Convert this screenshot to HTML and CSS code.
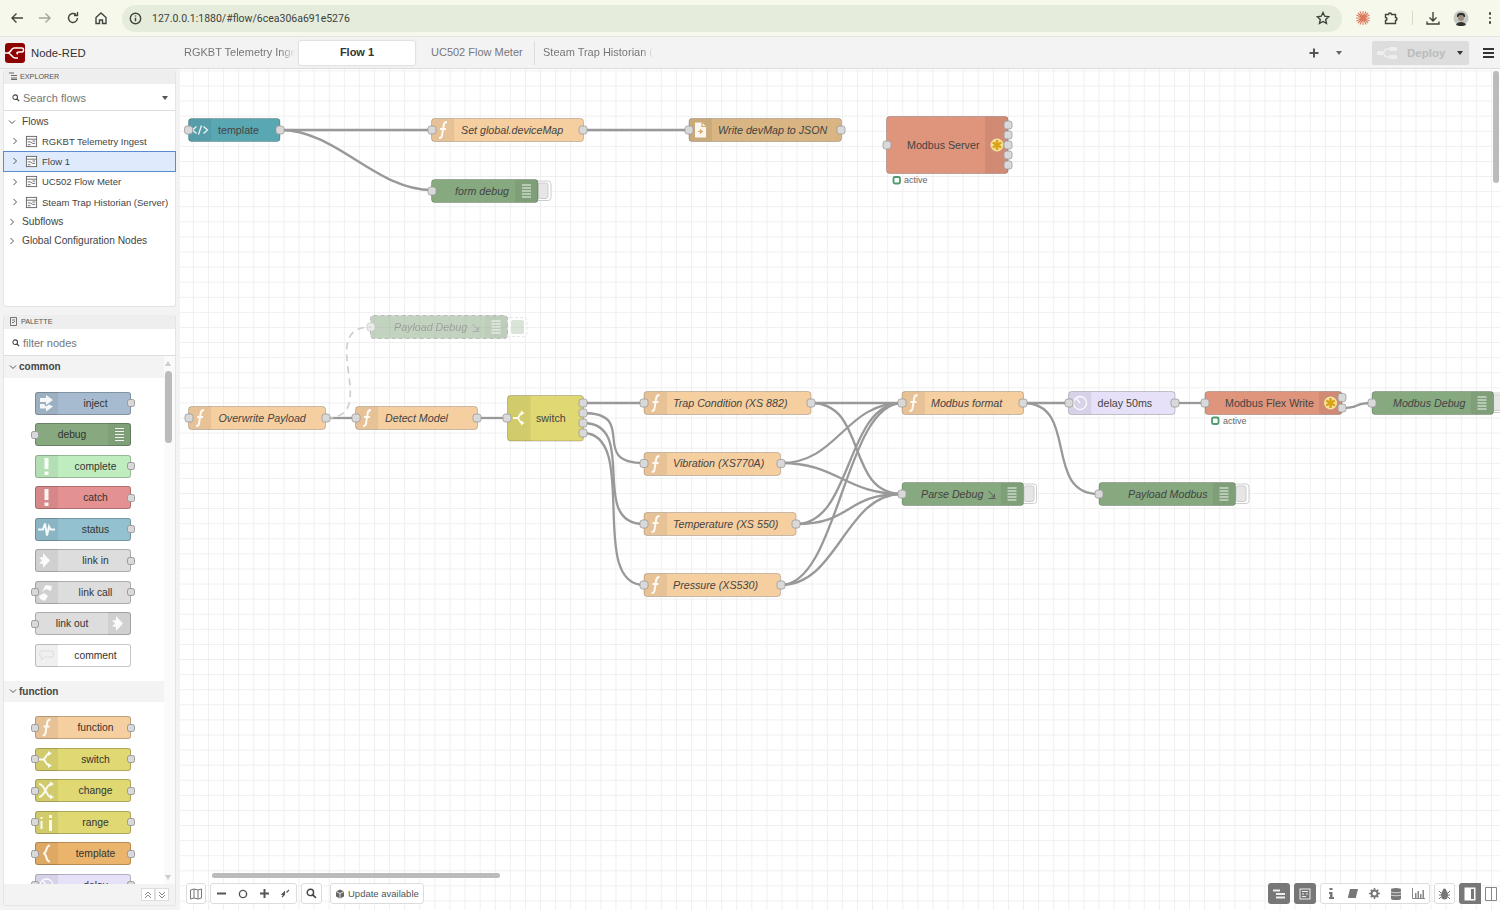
FILE: index.html
```html
<!DOCTYPE html>
<html lang="en">
<head>
    <meta charset="UTF-8">
    <title>Node-RED</title>
    <link rel="stylesheet" href="styles.css">
</head>
<body>
    <!-- shared icons: each node icon carries its own darker strip -->
    <svg class="sprite" width="0" height="0">
        <symbol id="strip-l" viewBox="0 0 23 23"><path class="strip" d="M3 0h20v23H3a3 3 0 0 1-3-3V3a3 3 0 0 1 3-3z"/></symbol>
        <symbol id="i-func" viewBox="0 0 23 23"><use href="#strip-l"/><path class="ic" d="M15.5 3.5c-2.6 0-3.1 1.4-3.4 3.6l-1.6 10c-.3 1.6-1 2.4-3 2.4M8.5 10.5h6"/></symbol>
        <symbol id="i-code" viewBox="0 0 23 23"><use href="#strip-l"/><path class="ic thin" d="M8 8l-4 3.5 4 3.5M15 8l4 3.5-4 3.500M13 7l-3 9"/></symbol>
        <symbol id="i-file" viewBox="0 0 23 23"><use href="#strip-l"/><path class="solid" d="M6 4h7l4 4v11H6z"/><path class="cut" d="M13 4v4h4M9 13h4l-2-2M13 13l-2 2"/></symbol>
        <symbol id="i-switch" viewBox="0 0 23 23"><use href="#strip-l"/><path class="ic" d="M3 11.5h5c3 0 2.5-5.5 6-6M8 11.5c3 0 2.5 5.500 6 6"/><path class="solid" d="M13 3l4 2.5-4 2.5zM13 15l4 2.5-4 2.5z"/></symbol>
        <symbol id="i-clock" viewBox="0 0 23 23"><use href="#strip-l"/><circle class="ic thin" cx="11.5" cy="11.5" r="6.5"/><path class="ic thin" d="M8 7l3.5 4.5"/></symbol>
        <symbol id="i-inject" viewBox="0 0 23 23"><use href="#strip-l"/><path class="solid" d="M5 6h6V3l7 5-7 5v-3H5zM5 12h4l2 2.5 3-2 4 2-7 5v-3H5z"/></symbol>
        <symbol id="i-bang" viewBox="0 0 23 23"><use href="#strip-l"/><path class="solid" d="M9.500 3h4v11h-4zM9.500 16.500h4v3.500h-4z"/></symbol>
        <symbol id="i-status" viewBox="0 0 23 23"><use href="#strip-l"/><path class="ic" d="M3 11.5h5l2-6 2 12 2-9 1.5 3H20"/></symbol>
        <symbol id="i-link" viewBox="0 0 23 23"><use href="#strip-l"/><path class="solid" d="M8 4l7 7.5-7 7.5v-4l-4-.5 3-3-3-3 4-.5z"/></symbol>
        <symbol id="i-linkcall" viewBox="0 0 23 23"><use href="#strip-l"/><path class="solid" d="M11 4l6 1-1 5-5-2-4 3 3-6zM4 15l5-3 4 3-3 5-5-2z"/></symbol>
        <symbol id="i-comment" viewBox="0 0 23 23"><use href="#strip-l"/><path class="soft" d="M6 7h11c2 0 2 6 0 6h-7l-4 3 1-3c-3 0-3-6-1-6z"/></symbol>
        <symbol id="i-change" viewBox="0 0 23 23"><use href="#strip-l"/><path class="ic" d="M4 5c6 0 7 13 12 13M4 18c6 0 7-13 12-13"/><path class="solid" d="M15 2.500l4 2.500-4 2.500zM15 15.500l4 2.500-4 2.500z"/></symbol>
        <symbol id="i-range" viewBox="0 0 23 23"><use href="#strip-l"/><path class="solid" d="M5.500 6h2v2h-2zM5.500 10h2v8h-2zM14 4h3v3h-3zM14 9h3v11h-3z"/></symbol>
        <symbol id="i-brace" viewBox="0 0 23 23"><use href="#strip-l"/><path class="ic" d="M15 3.500c-5 0-2 7-6.500 8 4.500 1 1.500 8 6.500 8"/></symbol>
        <symbol id="i-debug" viewBox="0 0 23 23"><path class="strip" d="M0 0h20a3 3 0 0 1 3 3v17a3 3 0 0 1-3 3H0z"/><path class="ic lines" d="M7 5.500h9M7 8.500h9M7 11.500h9M7 14.500h9M7 17.500h9"/></symbol>
        <symbol id="i-linkout" viewBox="0 0 23 23"><path class="strip" d="M0 0h20a3 3 0 0 1 3 3v17a3 3 0 0 1-3 3H0z"/><path class="solid" d="M8 4l7 7.5-7 7.5v-4l-4-.5 3-3-3-3 4-.5z"/></symbol>
        <symbol id="i-star" viewBox="0 0 16 16"><circle cx="8" cy="8" r="6.5" fill="#f6e3a0"/><path d="M8 3v10M3.700 5.500l8.600 5M3.700 10.500l8.600-5" stroke="#d9a516" stroke-width="2.600"/></symbol>
        <symbol id="i-flow" viewBox="0 0 14 14"><rect x="1.500" y="1.500" width="11" height="11" fill="#fff" stroke="#666"/><path d="M1.500 4.500h11M3 7.500h3M3 10.500h3M8 6.500h3M8 9h3M6 7.500l2 1.500" fill="none" stroke="#666"/></symbol>
        <symbol id="i-filter" viewBox="0 0 9 9"><path d="M1 1l6 6M7 4v3H4M1 8.500h7" fill="none" stroke="#555" stroke-width=".9"/></symbol>
        <symbol id="i-search" viewBox="0 0 10 10"><circle cx="4" cy="4" r="2.900" fill="none" stroke="#444" stroke-width="1.300"/><path d="M6.200 6.200L9 9" stroke="#444" stroke-width="1.500"/></symbol>
        <symbol id="i-chev" viewBox="0 0 8 8"><path d="M2.500 1l3 3-3 3" fill="none" stroke="#555" stroke-width="1"/></symbol>
        <symbol id="i-chevd" viewBox="0 0 8 8"><path d="M1 2.500l3 3 3-3" fill="none" stroke="#555" stroke-width="1"/></symbol>
    </svg>

    <div class="browser-bar">
        <div class="nav-btn"><svg width="14" height="14" viewBox="0 0 14 14"><path class="chrome-ic" d="M13 7H2M6.500 2.500L2 7l4.500 4.500"/></svg></div>
        <div class="nav-btn faded"><svg width="14" height="14" viewBox="0 0 14 14"><path class="chrome-ic" d="M1 7h11M7.500 2.500L12 7l-4.500 4.500"/></svg></div>
        <div class="nav-btn"><svg width="14" height="14" viewBox="0 0 14 14"><path class="chrome-ic" d="M11.500 7A4.500 4.500 0 1 1 10 3.600M11.500 1v3.500H8"/></svg></div>
        <div class="nav-btn"><svg width="14" height="14" viewBox="0 0 14 14"><path class="chrome-ic" d="M2 6.500L7 2l5 4.500V12.500H8.500V9h-3v3.500H2z"/></svg></div>
        <div class="url-pill">
            <svg width="13" height="13" viewBox="0 0 13 13"><circle class="chrome-ic" cx="6.500" cy="6.500" r="5.200"/><path class="chrome-ic" d="M6.500 5.800v3.400M6.500 3.600v1"/></svg>
            <span class="url-text">127.0.0.1:1880/#flow/6cea306a691e5276</span>
            <svg class="url-star" width="14" height="14" viewBox="0 0 14 14"><path class="chrome-ic" d="M7 1.500l1.700 3.700 4 .5-3 2.700.8 4L7 10.500l-3.500 1.900.8-4-3-2.700 4-.5z"/></svg>
        </div>
        <div class="nav-btn first-ext"><svg width="16" height="16" viewBox="0 0 16 16"><path d="M8 1v14M1 8h14M3 3l10 10M13 3L3 13M5 1.500l6 13M11 1.500l-6 13M1.500 5l13 6M1.500 11l13-6" stroke="#dc7a5c" stroke-width="1.100"/></svg></div>
        <div class="nav-btn"><svg width="14" height="14" viewBox="0 0 14 14"><path class="chrome-ic" d="M1.500 3.500h3a1.500 1.500 0 0 1 3 0h4v3a1.500 1.500 0 0 1 0 3v3h-10V9.500a1.500 1.500 0 0 0 0-3z"/></svg></div>
        <div class="bar-sep"></div>
        <div class="nav-btn"><svg width="14" height="14" viewBox="0 0 14 14"><path class="chrome-ic" d="M7 1v8.500M3.500 6.500L7 10l3.500-3.500M1 10.500V13h12v-2.500"/></svg></div>
        <div class="nav-btn"><svg width="16" height="16" viewBox="0 0 16 16"><circle cx="8" cy="8" r="7.500" fill="#c4c9c4"/><path d="M4 5c1-3 7-3 8 0v2H4z" fill="#2e2e2e"/><circle cx="8" cy="8" r="3" fill="#9b8d80"/><path d="M3 15c1-4 9-4 10 0l-3 1H6z" fill="#333"/></svg></div>
        <div class="dots"><i></i><i></i><i></i></div>
    </div>

    <header class="nr-header">
        <div class="brand">
            <svg width="20" height="20" viewBox="0 0 20 20"><rect width="20" height="20" rx="3" fill="#8f0000"/><path d="M0 10h3c3 0 3-5 6-5M3 10c3 0 4 5 7 5h3M14 5h3c2 0 2 4 0 4h-3c-2 0-3 1-1 2M9 5h5" fill="none" stroke="#fff" stroke-width="1.500"/></svg>
            <span>Node-RED</span>
        </div>
        <div class="tabs">
            <div class="tab cut-tab">RGKBT Telemetry Ingest</div>
            <div class="tab active">Flow 1</div>
            <div class="tab plain">UC502 Flow Meter</div>
            <div class="tab steam">Steam Trap Historian (Server)</div>
        </div>
        <div class="tab-tools">
            <svg width="10" height="10" viewBox="0 0 10 10"><path d="M5 .5v9M.5 5h9" stroke="#555" stroke-width="2"/></svg>
            <span class="caret"></span>
        </div>
        <div class="deploy">
            <svg width="20" height="14" viewBox="0 0 20 14"><path d="M1 7h5l3-4h4M6 7l3 4h4" fill="none" stroke="#eee" stroke-width="1.500"/><rect y="5" width="6" height="4" rx="1" fill="#eee"/><rect x="12" y="1" width="8" height="4" rx="1" fill="#eee"/><rect x="12" y="9" width="8" height="4" rx="1" fill="#eee"/></svg>
            <span>Deploy</span>
            <span class="caret dark"></span>
        </div>
        <div class="burger"><i></i><i></i><i></i></div>
    </header>

    <main class="workspace">
        <aside class="sidebar">
            <section class="panel explorer">
                <div class="panel-head">
                    <svg width="8" height="8" viewBox="0 0 8 8"><path d="M0 1h5M2 3.500h6M2 6h6M2 7.500h6" stroke="#666" stroke-width="1.200"/></svg>
                    EXPLORER
                </div>
                <div class="search-row">
                    <svg width="8" height="8"><use href="#i-search"/></svg>
                    <span>Search flows</span>
                    <span class="caret small"></span>
                </div>
                <div class="tree">
                    <div class="tree-row top"><svg class="chev" width="8" height="8"><use href="#i-chevd"/></svg>Flows</div>
                    <div class="tree-row flow-row"><svg class="chev" width="8" height="8"><use href="#i-chev"/></svg><svg class="flow-ic" width="13" height="13"><use href="#i-flow"/></svg>RGKBT Telemetry Ingest</div>
                    <div class="tree-row flow-row selected"><svg class="chev" width="8" height="8"><use href="#i-chev"/></svg><svg class="flow-ic" width="13" height="13"><use href="#i-flow"/></svg>Flow 1</div>
                    <div class="tree-row flow-row"><svg class="chev" width="8" height="8"><use href="#i-chev"/></svg><svg class="flow-ic" width="13" height="13"><use href="#i-flow"/></svg>UC502 Flow Meter</div>
                    <div class="tree-row flow-row"><svg class="chev" width="8" height="8"><use href="#i-chev"/></svg><svg class="flow-ic" width="13" height="13"><use href="#i-flow"/></svg>Steam Trap Historian (Server)</div>
                    <div class="tree-row top"><svg class="chev" width="8" height="8"><use href="#i-chev"/></svg>Subflows</div>
                    <div class="tree-row top"><svg class="chev" width="8" height="8"><use href="#i-chev"/></svg>Global Configuration Nodes</div>
                </div>
            </section>

            <section class="panel palette">
                <div class="panel-head">
                    <svg width="9" height="9" viewBox="0 0 9 9"><path d="M1.500 .5h6v8h-6zM3 3h3M3 5l1 1 2-2" fill="none" stroke="#666" stroke-width=".9"/></svg>
                    PALETTE
                </div>
                <div class="search-row">
                    <svg width="8" height="8"><use href="#i-search"/></svg>
                    <span>filter nodes</span>
                </div>
                <div class="palette-scroll">
                    <div class="palette-list">
                        <div class="cat-head"><svg width="8" height="8"><use href="#i-chevd"/></svg>common</div>
                        <div class="cat-body">
                            <div class="pal-node c-inject"><svg width="23" height="23"><use href="#i-inject"/></svg><span>inject</span><i class="pal-port out"></i></div>
                            <div class="pal-node c-debug right"><svg width="23" height="23"><use href="#i-debug"/></svg><span>debug</span><i class="pal-port in"></i></div>
                            <div class="pal-node c-complete"><svg width="23" height="23"><use href="#i-bang"/></svg><span>complete</span><i class="pal-port out"></i></div>
                            <div class="pal-node c-catch"><svg width="23" height="23"><use href="#i-bang"/></svg><span>catch</span><i class="pal-port out"></i></div>
                            <div class="pal-node c-status"><svg width="23" height="23"><use href="#i-status"/></svg><span>status</span><i class="pal-port out"></i></div>
                            <div class="pal-node c-link"><svg width="23" height="23"><use href="#i-link"/></svg><span>link in</span><i class="pal-port out"></i></div>
                            <div class="pal-node c-link"><svg width="23" height="23"><use href="#i-linkcall"/></svg><span>link call</span><i class="pal-port in"></i><i class="pal-port out"></i></div>
                            <div class="pal-node c-link right"><svg width="23" height="23"><use href="#i-linkout"/></svg><span>link out</span><i class="pal-port in"></i></div>
                            <div class="pal-node c-comment"><svg width="23" height="23"><use href="#i-comment"/></svg><span>comment</span></div>
                        </div>
                        <div class="cat-head"><svg width="8" height="8"><use href="#i-chevd"/></svg>function</div>
                        <div class="cat-body">
                            <div class="pal-node c-function"><svg width="23" height="23"><use href="#i-func"/></svg><span>function</span><i class="pal-port in"></i><i class="pal-port out"></i></div>
                            <div class="pal-node c-switch"><svg width="23" height="23"><use href="#i-switch"/></svg><span>switch</span><i class="pal-port in"></i><i class="pal-port out"></i></div>
                            <div class="pal-node c-switch"><svg width="23" height="23"><use href="#i-change"/></svg><span>change</span><i class="pal-port in"></i><i class="pal-port out"></i></div>
                            <div class="pal-node c-switch"><svg width="23" height="23"><use href="#i-range"/></svg><span>range</span><i class="pal-port in"></i><i class="pal-port out"></i></div>
                            <div class="pal-node c-template"><svg width="23" height="23"><use href="#i-brace"/></svg><span>template</span><i class="pal-port in"></i><i class="pal-port out"></i></div>
                            <div class="pal-node c-delay"><svg width="23" height="23"><use href="#i-clock"/></svg><span>delay</span><i class="pal-port in"></i><i class="pal-port out"></i></div>
                        </div>
                    </div>
                    <div class="pal-scrollbar">
                        <span class="arrow up"></span>
                        <span class="thumb"></span>
                        <span class="arrow down"></span>
                    </div>
                </div>
                <div class="palette-foot">
                    <div class="foot-btns">
                        <span><svg width="8" height="8" viewBox="0 0 8 8"><path d="M1 4l3-3 3 3M1 7l3-3 3 3" fill="none" stroke="#888"/></svg></span>
                        <span><svg width="8" height="8" viewBox="0 0 8 8"><path d="M1 1l3 3 3-3M1 4l3 3 3-3" fill="none" stroke="#888"/></svg></span>
                    </div>
                </div>
            </section>
        </aside>

        <div class="canvas">
            <svg class="flow-svg" width="1320" height="841">
                <g transform="translate(-180 -69)">
                    <!-- wires -->
                    <path class="wire" d="M280 130H432"/>
                    <path class="wire" d="M280 130C337 130 375 190 432 190"/>
                    <path class="wire" d="M583 130H689"/>
                    <path class="wire" d="M326 418H356"/>
                    <path class="wire dashed" d="M326 418C383 418 314 327 371 327"/>
                    <path class="wire" d="M477 418H507"/>
                    <path class="wire" d="M583 403H644"/>
                    <path class="wire" d="M583 413C640 413 587 463 644 463"/>
                    <path class="wire" d="M583 423C640 423 587 524 644 524"/>
                    <path class="wire" d="M583 433C640 433 587 585 644 585"/>
                    <path class="wire" d="M811 403H902"/>
                    <path class="wire" d="M811 403C868 403 845 494 902 494"/>
                    <path class="wire" d="M781 463C838 463 845 403 902 403"/>
                    <path class="wire" d="M781 463C838 463 845 494 902 494"/>
                    <path class="wire" d="M796 524C853 524 845 403 902 403"/>
                    <path class="wire" d="M796 524C853 524 845 494 902 494"/>
                    <path class="wire" d="M781 585C838 585 845 403 902 403"/>
                    <path class="wire" d="M781 585C838 585 845 494 902 494"/>
                    <path class="wire" d="M1023 403H1068"/>
                    <path class="wire" d="M1023 403C1080 403 1042 494 1099 494"/>
                    <path class="wire" d="M1175 403H1205"/>
                    <path class="wire" d="M1342 408C1362 408 1352 403 1372 403"/>

                    <!-- top row -->
                    <g class="node n-http">
                        <rect class="body" x="188.5" y="118.5" width="91.5" height="23" rx="3"/>
                        <use href="#i-code" x="188.5" y="118.5" width="23" height="23"/>
                        <text class="label" x="218" y="134">template</text>
                        <rect class="port" x="184.5" y="126" width="8" height="8" rx="2.5"/>
                        <rect class="port" x="276" y="126" width="8" height="8" rx="2.5"/>
                    </g>
                    <g class="node n-func">
                        <rect class="body" x="431.5" y="118.5" width="152" height="23" rx="3"/>
                        <use href="#i-func" x="431.5" y="118.5" width="23" height="23"/>
                        <text class="label em" x="461" y="134">Set global.deviceMap</text>
                        <rect class="port" x="428" y="126" width="8" height="8" rx="2.5"/>
                        <rect class="port" x="579" y="126" width="8" height="8" rx="2.5"/>
                    </g>
                    <g class="node n-file">
                        <rect class="body" x="689" y="118.5" width="152.5" height="23" rx="3"/>
                        <use href="#i-file" x="689" y="118.5" width="23" height="23"/>
                        <text class="label em" x="718" y="134">Write devMap to JSON</text>
                        <rect class="port" x="685" y="126" width="8" height="8" rx="2.5"/>
                        <rect class="port" x="837" y="126" width="8" height="8" rx="2.5"/>
                    </g>
                    <g class="node n-debug">
                        <rect class="btn-out" x="536" y="181" width="15" height="19.5" rx="3"/>
                        <rect class="btn-in" x="538" y="183" width="10" height="15.5" rx="2"/>
                        <rect class="body" x="431.5" y="179.5" width="106.5" height="23" rx="3"/>
                        <use href="#i-debug" x="515" y="179.5" width="23" height="23"/>
                        <text class="label em" x="455" y="195">form debug</text>
                        <rect class="port" x="428" y="187" width="8" height="8" rx="2.5"/>
                    </g>
                    <g class="node n-modbus">
                        <rect class="body" x="886.5" y="116.5" width="121.5" height="57" rx="3"/>
                        <path class="strip" d="M985 116.5h20a3 3 0 0 1 3 3v51a3 3 0 0 1-3 3h-20z"/>
                        <use href="#i-star" x="989" y="137" width="16" height="16"/>
                        <text class="label" x="907" y="149">Modbus Server</text>
                        <rect class="port" x="883" y="141" width="8" height="8" rx="2.5"/>
                        <rect class="port" x="1004" y="121" width="8" height="8" rx="2.5"/>
                        <rect class="port" x="1004" y="131" width="8" height="8" rx="2.5"/>
                        <rect class="port" x="1004" y="141" width="8" height="8" rx="2.5"/>
                        <rect class="port" x="1004" y="151" width="8" height="8" rx="2.5"/>
                        <rect class="port" x="1004" y="161" width="8" height="8" rx="2.5"/>
                        <rect class="dot" x="893.5" y="177" width="6.5" height="6.5" rx="1.5"/>
                        <text class="status" x="904" y="183">active</text>
                    </g>

                    <!-- disabled debug -->
                    <g class="node n-debug ghost">
                        <rect class="btn-out dash" x="507" y="317.5" width="20" height="19" rx="3"/>
                        <rect class="btn-in" x="511" y="320" width="13" height="14" rx="2"/>
                        <rect class="body" x="370.5" y="315.5" width="137" height="23" rx="3"/>
                        <use href="#i-debug" x="484.5" y="315.5" width="23" height="23"/>
                        <text class="label em" x="394" y="331">Payload Debug</text>
                        <use href="#i-filter" x="471.5" y="323" width="9" height="9"/>
                        <rect class="port" x="367" y="323" width="8" height="8" rx="2.5"/>
                    </g>

                    <!-- middle row -->
                    <g class="node n-func">
                        <rect class="body" x="188.5" y="406.5" width="137" height="23" rx="3"/>
                        <use href="#i-func" x="188.5" y="406.5" width="23" height="23"/>
                        <text class="label em" x="218.5" y="422">Overwrite Payload</text>
                        <rect class="port" x="185" y="414" width="8" height="8" rx="2.5"/>
                        <rect class="port" x="322" y="414" width="8" height="8" rx="2.5"/>
                    </g>
                    <g class="node n-func">
                        <rect class="body" x="355.5" y="406.5" width="122" height="23" rx="3"/>
                        <use href="#i-func" x="355.5" y="406.5" width="23" height="23"/>
                        <text class="label em" x="385" y="422">Detect Model</text>
                        <rect class="port" x="352" y="414" width="8" height="8" rx="2.5"/>
                        <rect class="port" x="473" y="414" width="8" height="8" rx="2.5"/>
                    </g>
                    <g class="node n-switch">
                        <rect class="body" x="507.5" y="395.5" width="76" height="45.5" rx="3"/>
                        <path class="strip" d="M510.500 395.5h20v45.5h-20a3 3 0 0 1-3-3v-39.5a3 3 0 0 1 3-3z"/>
                        <path class="ic" d="M513 418h4c3 0 2-5 5-5M517 418c3 0 2 5 5 5"/>
                        <path class="solid" d="M521 410.5l3.5 2.5-3.5 2.5zM521 420.5l3.5 2.5-3.5 2.5z"/>
                        <text class="label" x="536" y="422">switch</text>
                        <rect class="port" x="503" y="414" width="8" height="8" rx="2.5"/>
                        <rect class="port" x="579" y="399" width="8" height="8" rx="2.5"/>
                        <rect class="port" x="579" y="409" width="8" height="8" rx="2.5"/>
                        <rect class="port" x="579" y="419" width="8" height="8" rx="2.5"/>
                        <rect class="port" x="579" y="429" width="8" height="8" rx="2.5"/>
                    </g>
                    <g class="node n-func">
                        <rect class="body" x="644" y="391.5" width="167" height="23" rx="3"/>
                        <use href="#i-func" x="644" y="391.5" width="23" height="23"/>
                        <text class="label em" x="673" y="407">Trap Condition (XS 882)</text>
                        <rect class="port" x="640" y="399" width="8" height="8" rx="2.5"/>
                        <rect class="port" x="807" y="399" width="8" height="8" rx="2.5"/>
                    </g>
                    <g class="node n-func">
                        <rect class="body" x="644" y="452.5" width="136.5" height="23" rx="3"/>
                        <use href="#i-func" x="644" y="452.5" width="23" height="23"/>
                        <text class="label em" x="673" y="467">Vibration (XS770A)</text>
                        <rect class="port" x="640" y="459.5" width="8" height="8" rx="2.5"/>
                        <rect class="port" x="777" y="459.5" width="8" height="8" rx="2.5"/>
                    </g>
                    <g class="node n-func">
                        <rect class="body" x="644" y="512.5" width="152" height="23" rx="3"/>
                        <use href="#i-func" x="644" y="512.5" width="23" height="23"/>
                        <text class="label em" x="673" y="528">Temperature (XS 550)</text>
                        <rect class="port" x="640" y="520" width="8" height="8" rx="2.5"/>
                        <rect class="port" x="792" y="520" width="8" height="8" rx="2.5"/>
                    </g>
                    <g class="node n-func">
                        <rect class="body" x="644" y="573.5" width="136.5" height="23" rx="3"/>
                        <use href="#i-func" x="644" y="573.5" width="23" height="23"/>
                        <text class="label em" x="673" y="589">Pressure (XS530)</text>
                        <rect class="port" x="640" y="581" width="8" height="8" rx="2.5"/>
                        <rect class="port" x="777" y="581" width="8" height="8" rx="2.5"/>
                    </g>
                    <g class="node n-func">
                        <rect class="body" x="902" y="391.5" width="121.5" height="23" rx="3"/>
                        <use href="#i-func" x="902" y="391.5" width="23" height="23"/>
                        <text class="label em" x="931" y="407">Modbus format</text>
                        <rect class="port" x="898" y="399" width="8" height="8" rx="2.5"/>
                        <rect class="port" x="1019" y="399" width="8" height="8" rx="2.5"/>
                    </g>
                    <g class="node n-debug">
                        <rect class="btn-out" x="1021" y="484" width="15.5" height="19.5" rx="3"/>
                        <rect class="btn-in" x="1024" y="486" width="10" height="15.5" rx="2"/>
                        <rect class="body" x="902" y="482.5" width="121.5" height="23" rx="3"/>
                        <use href="#i-debug" x="1000.5" y="482.5" width="23" height="23"/>
                        <text class="label em" x="921" y="498">Parse Debug</text>
                        <use href="#i-filter" x="987.5" y="490" width="9" height="9"/>
                        <rect class="port" x="898" y="490" width="8" height="8" rx="2.5"/>
                    </g>
                    <g class="node n-delay">
                        <rect class="body" x="1068.5" y="391.5" width="106.5" height="23" rx="3"/>
                        <use href="#i-clock" x="1068.5" y="391.5" width="23" height="23"/>
                        <text class="label" x="1097.5" y="407">delay 50ms</text>
                        <rect class="port" x="1065" y="399" width="8" height="8" rx="2.5"/>
                        <rect class="port" x="1171" y="399" width="8" height="8" rx="2.5"/>
                    </g>
                    <g class="node n-modbus">
                        <rect class="body" x="1205" y="391.5" width="137" height="23" rx="3"/>
                        <path class="strip" d="M1319 391.5h20a3 3 0 0 1 3 3v17a3 3 0 0 1-3 3h-20z"/>
                        <use href="#i-star" x="1322.5" y="395" width="16" height="16"/>
                        <text class="label" x="1225" y="407">Modbus Flex Write</text>
                        <rect class="port" x="1201" y="399" width="8" height="8" rx="2.5"/>
                        <rect class="port" x="1338" y="393.5" width="8" height="8" rx="2.5"/>
                        <rect class="port" x="1338" y="404" width="8" height="8" rx="2.5"/>
                        <rect class="dot" x="1212" y="417.5" width="6.5" height="6.5" rx="1.5"/>
                        <text class="status" x="1223" y="424">active</text>
                    </g>
                    <g class="node n-debug">
                        <rect class="btn-out" x="1490" y="393" width="15.5" height="19.5" rx="3"/>
                        <rect class="btn-in" x="1493" y="395" width="10" height="15.5" rx="2"/>
                        <rect class="body" x="1372" y="391.5" width="121.5" height="23" rx="3"/>
                        <use href="#i-debug" x="1470.5" y="391.5" width="23" height="23"/>
                        <text class="label em" x="1393" y="407">Modbus Debug</text>
                        <rect class="port" x="1368" y="399" width="8" height="8" rx="2.5"/>
                    </g>
                    <g class="node n-debug">
                        <rect class="btn-out" x="1233" y="484" width="16" height="19.5" rx="3"/>
                        <rect class="btn-in" x="1236" y="486" width="10" height="15.5" rx="2"/>
                        <rect class="body" x="1099" y="482.5" width="136.5" height="23" rx="3"/>
                        <use href="#i-debug" x="1212.5" y="482.5" width="23" height="23"/>
                        <text class="label em" x="1128" y="498">Payload Modbus</text>
                        <rect class="port" x="1095" y="490" width="8" height="8" rx="2.5"/>
                    </g>
                </g>
            </svg>

            <span class="scroll-v"></span>
            <span class="scroll-h"></span>

            <div class="tools-left">
                <div class="tool-group map"><span class="tool"><svg width="12" height="12" viewBox="0 0 12 12"><path d="M.5 2l3.500-1 4 1 3.500-1v9l-3.500 1-4-1L.5 11zM4 1v9M8 2v9" fill="none" stroke="#777"/></svg></span></div>
                <div class="tool-group zoom">
                    <span class="tool"><svg width="9" height="9" viewBox="0 0 9 9"><path d="M0 4.500h9" stroke="#555" stroke-width="2"/></svg></span>
                    <span class="tool"><svg width="10" height="10" viewBox="0 0 10 10"><circle cx="5" cy="5" r="3.600" fill="none" stroke="#555" stroke-width="1.400"/></svg></span>
                    <span class="tool"><svg width="9" height="9" viewBox="0 0 9 9"><path d="M0 4.500h9M4.500 0v9" stroke="#555" stroke-width="2"/></svg></span>
                    <span class="tool"><svg width="9" height="9" viewBox="0 0 9 9"><path d="M1 8l2.500-2.500M8 1L5.500 3.500M1 5.500l2.500 0v-2.500z" stroke="#555" stroke-width="1.200" fill="#555"/></svg></span>
                </div>
                <div class="tool-group"><span class="tool"><svg width="11" height="11"><use href="#i-search"/></svg></span></div>
                <div class="tool-group update">
                    <svg width="10" height="10" viewBox="0 0 10 10"><path d="M5 .5l4 2v5l-4 2-4-2v-5z" fill="#666"/><path d="M1 2.500l4 2 4-2M5 4.500v5" fill="none" stroke="#fff" stroke-width=".8"/></svg>
                    <span>Update available</span>
                </div>
            </div>

            <div class="tools-right">
                <span class="tool dark"><svg width="12" height="12" viewBox="0 0 12 12"><path d="M0 1.500h7v2H0zM3 5h9v2H3zM3 8.500h9v2H3z" fill="#eee"/></svg></span>
                <span class="tool dark"><svg width="12" height="12" viewBox="0 0 12 12"><rect x="1" y="1" width="10" height="10" fill="none" stroke="#eee"/><path d="M3 3.500h6M3 6h2M7 6h2M3 8.500h4" stroke="#eee"/></svg></span>
                <div class="tool-group sidebar-tabs">
                    <span class="tool"><svg width="9" height="11" viewBox="0 0 9 11"><path d="M2.500 0h3v2h-3zM2 4h3.500v5H7v2H2V9h1V6H2z" fill="#777"/></svg></span>
                    <span class="tool"><svg width="12" height="11" viewBox="0 0 12 11"><path d="M3 1h8L9 9H1z" fill="#777"/><path d="M1 9.500h8" stroke="#777"/></svg></span>
                    <span class="tool"><svg width="11" height="11" viewBox="0 0 11 11"><circle cx="5.500" cy="5.500" r="3" fill="none" stroke="#777" stroke-width="2"/><path d="M5.500 0v2M5.500 9v2M0 5.500h2M9 5.500h2M1.700 1.700l1.300 1.300M8 8l1.300 1.300M1.700 9.300L3 8M8 3l1.300-1.300" stroke="#777" stroke-width="1.500"/></svg></span>
                    <span class="tool"><svg width="10" height="12" viewBox="0 0 10 12"><path d="M0 1.500a5 1.500 0 0 1 10 0v9a5 1.500 0 0 1-10 0z" fill="#777"/><path d="M0 4c2 1 8 1 10 0M0 7c2 1 8 1 10 0" fill="none" stroke="#fff" stroke-width=".7"/></svg></span>
                    <span class="tool"><svg width="13" height="11" viewBox="0 0 13 11"><path d="M.5 0v10.500H13" fill="none" stroke="#888"/><path d="M3 5h1.500v5H3zM5.500 3H7v7H5.500zM8 6h1.500v4H8zM10.500 2H12v8h-1.500z" fill="#888"/></svg></span>
                </div>
                <div class="tool-group"><span class="tool"><svg width="11" height="12" viewBox="0 0 11 12"><ellipse cx="5.500" cy="7" rx="3.500" ry="4.500" fill="#777"/><circle cx="5.500" cy="2.200" r="1.800" fill="#777"/><path d="M0 3l2 2M11 3L9 5M0 7h2M9 7h2M0 11l2-2M11 11L9 9" stroke="#777"/></svg></span></div>
                <div class="layout-btns">
                    <span class="tool dark"><svg width="12" height="14" viewBox="0 0 12 14"><rect x=".5" y=".5" width="11" height="13" fill="#fff"/><rect x="7" y="2" width="3" height="10" fill="#777"/></svg></span>
                    <span class="tool"><svg width="12" height="14" viewBox="0 0 12 14"><path d="M.5.500h11v13H.5zM6.500.5v13" fill="none" stroke="#888"/></svg></span>
                </div>
            </div>
        </div>
    </main>
</body>
</html>
```

FILE: styles.css
```css
* {
    box-sizing: border-box;
}

body {
    margin: 0;
    height: 910px;
    overflow: hidden;
    display: flex;
    flex-direction: column;
    font-family: "Liberation Sans", Arial, sans-serif;
    color: #444;
    background-color: #f3f3f3;
}

.sprite {
    position: absolute;
}

/* shared icon paint */
.strip {
    fill: rgba(0, 0, 0, 0.06);
}

.ic {
    fill: none;
    stroke: #fff;
    stroke-width: 2;
    opacity: 0.9;
}

.ic.thin {
    stroke-width: 1.3;
}

.ic.lines {
    stroke-width: 1.2;
}

.solid {
    fill: #fff;
    opacity: 0.9;
}

.soft {
    fill: #f0f0f0;
    stroke: #ddd;
}

.cut {
    fill: none;
    stroke: #d6a55f;
    stroke-width: 1.2;
}

.caret {
    width: 0;
    height: 0;
    border-left: 3.5px solid transparent;
    border-right: 3.5px solid transparent;
    border-top: 4px solid #666;
}

.caret.dark {
    border-top-color: #333;
}

.caret.small {
    margin-left: auto;
    margin-right: 7px;
    border-top-color: #555;
}

/* browser bar */
.browser-bar {
    height: 37px;
    flex: none;
    display: flex;
    align-items: center;
    padding-left: 3px;
    background-color: #f6f8ec;
    border-bottom: 1px solid #e4e6dd;
}

.nav-btn {
    width: 28px;
    height: 28px;
    flex: none;
    display: flex;
    align-items: center;
    justify-content: center;
}

.nav-btn.faded {
    opacity: 0.45;
}

.nav-btn.first-ext {
    margin-left: 7px;
}

.chrome-ic {
    fill: none;
    stroke: #3f443c;
    stroke-width: 1.4;
}

.url-pill {
    width: 1220px;
    height: 27px;
    flex: none;
    margin-left: 7px;
    display: flex;
    align-items: center;
    padding: 0 12px 0 7px;
    border-radius: 14px;
    background-color: #e6ecdc;
}

.url-text {
    margin-left: 10px;
    font-size: 10.5px;
    font-family: Roboto, sans-serif;
    color: #3c4139;
}

.url-star {
    margin-left: auto;
}

.bar-sep {
    width: 1px;
    height: 14px;
    margin: 0 6px 0 7px;
    background-color: #d5dcc8;
}

.dots {
    flex: 1;
    display: flex;
    flex-direction: column;
    align-items: flex-end;
    gap: 2px;
    padding-right: 9px;
}

.dots i {
    width: 2.5px;
    height: 2.5px;
    border-radius: 50%;
    background-color: #3f443c;
}

/* node-red header */
.nr-header {
    height: 32px;
    flex: none;
    display: flex;
    align-items: center;
    padding-left: 5px;
    background-color: #f3f3f3;
    border-bottom: 1px solid #ddd;
}

.brand {
    width: 179px;
    display: flex;
    align-items: center;
    gap: 6px;
    font-size: 11.3px;
    color: #333;
}

.tabs {
    display: flex;
    align-items: center;
    flex: 1;
    font-size: 11px;
    color: #777;
}

.tab {
    height: 24px;
    display: flex;
    align-items: center;
    padding-bottom: 2px;
    white-space: nowrap;
    overflow: hidden;
}

.cut-tab {
    width: 111px;
    margin-right: 4px;
    -webkit-mask-image: linear-gradient(to right, #000 88%, transparent);
    mask-image: linear-gradient(to right, #000 88%, transparent);
}

.tab.active {
    width: 116px;
    justify-content: center;
    font-weight: bold;
    color: #333;
    background-color: #fff;
    border-radius: 2px;
    box-shadow: 0 0 2px rgba(0, 0, 0, 0.25);
}

.plain {
    margin-left: 16px;
    width: 104px;
    border-right: 1px solid #ddd;
}

.steam {
    margin-left: 8px;
    width: 110px;
    -webkit-mask-image: linear-gradient(to right, #000 90%, transparent);
    mask-image: linear-gradient(to right, #000 90%, transparent);
}

.tab-tools {
    display: flex;
    align-items: center;
    gap: 17px;
    margin: 0 30px 0 1px;
}

.deploy {
    width: 97px;
    height: 24px;
    display: flex;
    align-items: center;
    padding: 0 6px 0 5px;
    font-size: 11.5px;
    font-weight: bold;
    color: #bbb;
    background-color: #ddd;
    border-radius: 2px;
}

.deploy span:nth-child(2) {
    margin-left: 10px;
}

.deploy .caret {
    margin-left: auto;
}

.burger {
    margin: 0 6px 0 14px;
    display: flex;
    flex-direction: column;
    gap: 2px;
}

.burger i {
    width: 11px;
    height: 2px;
    background-color: #333;
}

/* sidebar */
.workspace {
    flex: 1;
    display: flex;
    min-height: 0;
}

.sidebar {
    width: 180px;
    flex: none;
    display: flex;
    flex-direction: column;
    gap: 8px;
    padding: 1px 4px 4px 3px;
    background-color: #f3f3f3;
}

.panel {
    display: flex;
    flex-direction: column;
    background-color: #fff;
    border: 1px solid #e4e4e4;
    border-top: none;
    border-radius: 3px;
}

.explorer {
    height: 237px;
    flex: none;
}

.palette {
    flex: 1;
    min-height: 0;
}

.panel-head {
    height: 14px;
    flex: none;
    display: flex;
    align-items: center;
    gap: 3px;
    padding: 0 0 2px 5px;
    font-size: 7.2px;
    color: #555;
    background-color: #eee;
}

.search-row {
    height: 27px;
    flex: none;
    display: flex;
    align-items: center;
    gap: 3px;
    padding: 2px 0 0 8px;
    font-size: 11px;
    color: #777;
    background-color: #fff;
    border-bottom: 1px solid #ddd;
}

.tree {
    padding-top: 1px;
    font-size: 10.2px;
    color: #444;
}

.tree-row {
    height: 19px;
    display: flex;
    align-items: center;
    white-space: nowrap;
}

.tree-row.top {
    padding-left: 4px;
}

.tree-row.top .chev {
    margin-right: 6px;
}

.tree-row.flow-row {
    padding-left: 7px;
    font-size: 9.5px;
    height: 20.3px;
}

.flow-row .chev {
    margin-right: 6px;
}

.flow-ic {
    margin-right: 4px;
}

.tree-row.selected {
    margin: 0 -1px;
    padding-left: 8px;
    background-color: #dfeafc;
    outline: 1px solid #5a8bcf;
    outline-offset: -1px;
}

/* palette */
.palette-scroll {
    flex: 1;
    min-height: 0;
    display: flex;
    overflow: hidden;
}

.palette-list {
    width: 160px;
    flex: none;
    background-color: #fff;
}

.cat-head {
    height: 21.5px;
    display: flex;
    align-items: center;
    gap: 2px;
    padding-left: 5px;
    font-size: 10px;
    font-weight: bold;
    color: #444;
    background-color: #f3f3f3;
}

.cat-body {
    display: flex;
    flex-direction: column;
    gap: 8.5px;
    padding: 14px 0 14px 31px;
}

.pal-node {
    position: relative;
    width: 96px;
    height: 23px;
    flex: none;
    display: flex;
    align-items: center;
    font-size: 10.3px;
    color: #333;
    border: 1px solid rgba(0, 0, 0, 0.22);
    border-radius: 3px;
}

.pal-node svg {
    flex: none;
    margin: -1px 0 -1px -1px;
}

.pal-node span {
    flex: 1;
    padding-left: 3px;
    text-align: center;
}

.pal-node.right {
    flex-direction: row-reverse;
}

.pal-node.right svg {
    margin: -1px -1px -1px 0;
}

.pal-node.right span {
    padding-left: 0;
}

.pal-port {
    position: absolute;
    top: 6.5px;
    width: 8px;
    height: 8px;
    border-radius: 2.5px;
    background-color: #d9d9d9;
    border: 1px solid #999;
}

.pal-port.in {
    left: -5px;
}

.pal-port.out {
    right: -5px;
}

.c-inject { background-color: #a6bbcf; }
.c-debug { background-color: #87a980; }
.c-complete { background-color: #c0edc0; }
.c-catch { background-color: #e49191; }
.c-status { background-color: #94c1d0; }
.c-link { background-color: #ddd; }
.c-comment { background-color: #fff; }
.c-function { background-color: #f6cfa0; }
.c-switch { background-color: #e0d872; }
.c-template { background-color: #ebb46c; }
.c-delay { background-color: #e6e0f8; }

.pal-scrollbar {
    position: relative;
    flex: 1;
    background-color: #fafafa;
}

.thumb {
    position: absolute;
    top: 15px;
    left: 1px;
    width: 7px;
    height: 72px;
    border-radius: 4px;
    background-color: #bbb;
}

.arrow {
    position: absolute;
    left: 1px;
    border-left: 3.5px solid transparent;
    border-right: 3.5px solid transparent;
}

.arrow.up {
    top: 5px;
    border-bottom: 5px solid #ccc;
}

.arrow.down {
    bottom: 4px;
    border-top: 5px solid #ccc;
}

.palette-foot {
    height: 21px;
    flex: none;
    display: flex;
    justify-content: flex-end;
    align-items: center;
    padding-right: 6px;
    background-color: #f3f3f3;
}

.foot-btns {
    display: flex;
    height: 13px;
}

.foot-btns span {
    width: 14px;
    display: flex;
    align-items: center;
    justify-content: center;
    background-color: #fff;
    border: 1px solid #ddd;
}

/* flow canvas */
.canvas {
    position: relative;
    flex: 1;
    overflow: hidden;
    background-color: #fff;
    background-image:
        linear-gradient(to right, #efefef 1px, transparent 1px),
        linear-gradient(to bottom, #efefef 1px, transparent 1px);
    background-size: 15.1px 15.1px;
    background-position: 12.9px 1.4px;
}

.flow-svg {
    display: block;
}

.wire {
    fill: none;
    stroke: #999;
    stroke-width: 2.3;
}

.wire.dashed {
    stroke: #ccc;
    stroke-width: 1.6;
    stroke-dasharray: 7 5;
}

.node .body {
    stroke: rgba(0, 0, 0, 0.2);
    stroke-width: 1;
}

.label {
    font-size: 10.7px;
    fill: #444;
}

.label.em {
    font-style: italic;
}

.status {
    font-size: 9px;
    fill: #666;
}

.dot {
    fill: #fff;
    stroke: #4c9a6c;
    stroke-width: 1.8;
}

.port {
    fill: #d9d9d9;
    stroke: #999;
    stroke-width: 0.8;
}

.btn-out {
    fill: #fff;
    stroke: #ccc;
}

.btn-out.dash {
    stroke-dasharray: 3 2;
}

.btn-in {
    fill: #e6e6e6;
    stroke: #ccc;
}

.n-http .body { fill: #5aa7b4; }
.n-func .body { fill: #f6cfa0; }
.n-file .body { fill: #d8b582; }
.n-debug .body { fill: #87a980; }
.n-modbus .body { fill: #df947c; }
.n-switch .body { fill: #e0d872; }
.n-delay .body { fill: #e6e0f8; }

.ghost {
    opacity: 0.5;
}

.ghost .body {
    stroke: #777;
    stroke-dasharray: 4 3;
}

.ghost .btn-in {
    fill: #87a980;
    stroke: none;
    opacity: 0.6;
}

.scroll-v {
    position: absolute;
    top: 2px;
    right: 1px;
    width: 6px;
    height: 112px;
    border-radius: 3px;
    background-color: #bbb;
}

.scroll-h {
    position: absolute;
    left: 32px;
    bottom: 32px;
    width: 288px;
    height: 5px;
    border-radius: 3px;
    background-color: #bbb;
}

/* canvas toolbars */
.tools-left,
.tools-right {
    position: absolute;
    bottom: 6px;
    display: flex;
    align-items: stretch;
    height: 21px;
}

.tools-left {
    left: 6px;
    gap: 4px;
}

.tools-right {
    right: 0;
    gap: 4px;
}

.tool-group {
    display: flex;
    background-color: #fff;
    border: 1px solid #ddd;
    border-radius: 3px;
}

.tool {
    width: 19px;
    height: 100%;
    display: flex;
    align-items: center;
    justify-content: center;
}

.map .tool {
    width: 18px;
}

.tool.dark {
    width: 22px;
    background-color: #777;
    border-radius: 3px;
}

.zoom .tool {
    width: 21.25px;
}

.update {
    margin-left: 4px;
    align-items: center;
    gap: 3px;
    padding: 0 4px;
    font-size: 9.5px;
    color: #555;
}

.sidebar-tabs .tool {
    width: 21.7px;
}

.layout-btns {
    display: flex;
}

.layout-btns .tool {
    width: 19px;
}

.layout-btns .tool.dark {
    width: 22px;
    border-radius: 3px 0 0 3px;
}
```
